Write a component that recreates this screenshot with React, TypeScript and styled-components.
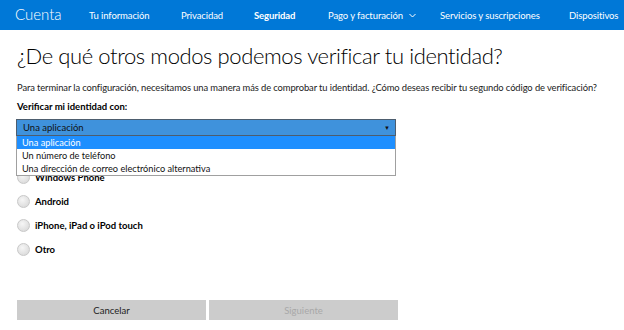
import React from 'react';
import styled, { createGlobalStyle } from 'styled-components';

const GlobalStyle = createGlobalStyle`
  html, body {
    margin: 0;
    padding: 0;
    background: #fff;
  }
  body {
    font-family: Lato, "Open Sans", sans-serif;
    color: #000;
  }
`;

const NavBar = styled.header`
  height: 30px;
  background: #0078d7;
  display: flex;
  align-items: center;
  padding: 0 0 0 15px;
  color: #fff;
  white-space: nowrap;
  overflow: hidden;
`;

const Brand = styled.div`
  width: 74px;
  flex: none;
  font-size: 15px;
  font-weight: 300;
  margin-top: -3px;
`;

const NavItem = styled.div<{ $active?: boolean; $w?: number }>`
  flex: none;
  width: ${(p) => (p.$w ? `${p.$w}px` : 'auto')};
  font-size: 9.5px;
  letter-spacing: -0.1px;
  font-weight: ${(p) => (p.$active ? 700 : 400)};
  display: flex;
  align-items: center;
  gap: 6px;
`;

const Main = styled.main`
  padding: 0 17px;
`;

const Title = styled.h1`
  font-size: 22px;
  line-height: 32px;
  letter-spacing: -0.4px;
  font-weight: 300;
  margin: 10px 0 0;
  white-space: nowrap;
`;

const Intro = styled.p`
  font-size: 9.4px;
  line-height: 11px;
  letter-spacing: -0.1px;
  margin: 10px 0 0;
  color: #222;
  white-space: nowrap;
`;

const Label = styled.div`
  font-size: 9.5px;
  line-height: 12px;
  font-weight: 700;
  margin-top: 8px;
`;

const SelectWrap = styled.div`
  position: relative;
  width: 380px;
  margin-top: 6px;
  margin-left: -1px;
`;

const SelectBox = styled.div`
  height: 15px;
  background: #3f92dc;
  border: 1px solid #4d5d6e;
  display: flex;
  align-items: center;
  justify-content: space-between;
  padding: 0 5px 0 6px;
  font-size: 9.5px;
  color: #111;
`;

const Caret = styled.span`
  font-size: 6px;
`;

const OptionList = styled.ul`
  position: absolute;
  top: 17px;
  left: 0;
  right: 0;
  margin: 0;
  padding: 0;
  list-style: none;
  background: #fff;
  border: 1px solid #a0a0a0;
  border-top: none;
  z-index: 2;
`;

const Option = styled.li<{ $selected?: boolean }>`
  height: 13px;
  line-height: 13px;
  font-size: 9.2px;
  padding-left: 5px;
  background: ${(p) => (p.$selected ? '#1e8fff' : '#fff')};
  color: ${(p) => (p.$selected ? '#fff' : '#111')};
`;

const RadioList = styled.div`
  margin-top: 35px;
  display: flex;
  flex-direction: column;
  gap: 11px;
`;

const RadioRow = styled.label`
  display: flex;
  align-items: center;
  gap: 5px;
  height: 13px;
  font-size: 9.5px;
  font-weight: 700;
`;

const RadioDot = styled.span`
  width: 11px;
  height: 11px;
  border-radius: 50%;
  border: 1px solid #c8c8c8;
  background: radial-gradient(circle at 40% 35%, #f6f6f6, #d4d4d4);
`;

const Buttons = styled.div`
  display: flex;
  gap: 3px;
  margin-top: 44px;
`;

const Button = styled.button<{ $disabled?: boolean }>`
  width: 189px;
  height: 20px;
  border: none;
  background: #cccccc;
  font-family: inherit;
  font-size: 9.5px;
  color: ${(p) => (p.$disabled ? '#a8a8a8' : '#222')};
  padding: 0;
`;

const nav = [
  { label: 'Tu información', w: 92 },
  { label: 'Privacidad', w: 73 },
  { label: 'Seguridad', w: 74, active: true },
  { label: 'Pago y facturación', w: 112, menu: true },
  { label: 'Servicios y suscripciones', w: 129 },
  { label: 'Dispositivos' },
];

const options = ['Una aplicación', 'Un número de teléfono', 'Una dirección de correo electrónico alternativa'];
const devices = ['Windows Phone', 'Android', 'iPhone, iPad o iPod touch', 'Otro'];

export default function App() {
  return (
    <>
      <GlobalStyle />
      <NavBar>
        <Brand>Cuenta</Brand>
        {nav.map((n) => (
          <NavItem key={n.label} $active={n.active} $w={n.w}>
            {n.label}
            {n.menu && (
              <svg width="7" height="5" viewBox="0 0 7 5">
                <path d="M0.5 1 L3.5 4 L6.5 1" fill="none" stroke="#fff" strokeWidth="1" />
              </svg>
            )}
          </NavItem>
        ))}
      </NavBar>
      <Main>
        <Title>¿De qué otros modos podemos verificar tu identidad?</Title>
        <Intro>
          Para terminar la configuración, necesitamos una manera más de comprobar tu identidad. ¿Cómo deseas recibir tu
          segundo código de verificación?
        </Intro>
        <Label>Verificar mi identidad con:</Label>
        <SelectWrap>
          <SelectBox>
            <span>Una aplicación</span>
            <Caret>▼</Caret>
          </SelectBox>
          <OptionList>
            {options.map((o, i) => (
              <Option key={o} $selected={i === 0}>
                {o}
              </Option>
            ))}
          </OptionList>
        </SelectWrap>
        <RadioList>
          {devices.map((d) => (
            <RadioRow key={d}>
              <RadioDot />
              {d}
            </RadioRow>
          ))}
        </RadioList>
        <Buttons>
          <Button>Cancelar</Button>
          <Button $disabled>Siguiente</Button>
        </Buttons>
      </Main>
    </>
  );
}
